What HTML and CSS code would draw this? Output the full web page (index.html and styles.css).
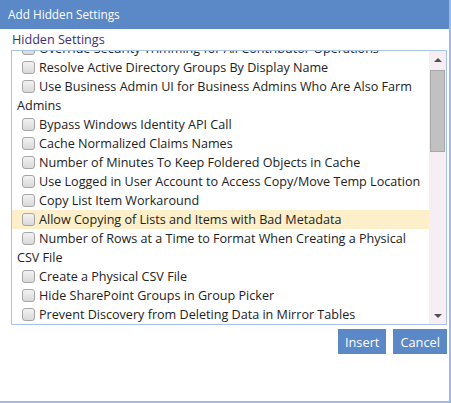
FILE: index.html
```html
<!DOCTYPE html>
<html>
<head>
<meta charset="utf-8">
<link rel="stylesheet" href="styles.css">
</head>
<body>
<div class="dialog">
  <div class="titlebar">Add Hidden Settings</div>
  <div class="body">
    <div class="label">Hidden Settings</div>
    <div class="listbox">
      <div class="viewport">
        <ul class="items">
          <li><span class="cb"></span>Override Security Trimming for All Contributor Operations</li>
          <li><span class="cb"></span>Resolve Active Directory Groups By Display Name</li>
          <li><span class="cb"></span>Use Business Admin UI for Business Admins Who Are Also Farm Admins</li>
          <li><span class="cb"></span>Bypass Windows Identity API Call</li>
          <li><span class="cb"></span>Cache Normalized Claims Names</li>
          <li><span class="cb"></span>Number of Minutes To Keep Foldered Objects in Cache</li>
          <li><span class="cb"></span>Use Logged in User Account to Access Copy/Move Temp Location</li>
          <li><span class="cb"></span>Copy List Item Workaround</li>
          <li class="hl"><span class="cb"></span>Allow Copying of Lists and Items with Bad Metadata</li>
          <li><span class="cb"></span>Number of Rows at a Time to Format When Creating a Physical CSV File</li>
          <li><span class="cb"></span>Create a Physical CSV File</li>
          <li><span class="cb"></span>Hide SharePoint Groups in Group Picker</li>
          <li><span class="cb"></span>Prevent Discovery from Deleting Data in Mirror Tables</li>
          <li><span class="cb"></span>Enable Verbose Logging</li>
        </ul>
      </div>
      <div class="scrollbar">
        <div class="arrow up"></div>
        <div class="track"><div class="thumb"></div></div>
        <div class="arrow down"></div>
      </div>
    </div>
    <div class="actions">
      <button class="btn">Insert</button>
      <button class="btn">Cancel</button>
    </div>
  </div>
</div>
</body>
</html>
```
FILE: styles.css
```css
html, body {
  margin: 0;
  padding: 0;
  background: #ffffff;
}
body {
  font-family: "Open Sans", "Noto Sans", sans-serif;
  font-size: 12.6px;
  color: #222;
}
.dialog {
  width: 449px;
  height: 401px;
  border-right: 2px solid #9dbbe6;
  border-bottom: 2px solid #9dbbe6;
  display: flex;
  flex-direction: column;
}
.titlebar {
  height: 29px;
  background: #5b88c6;
  color: #fff;
  font-size: 11.8px;
  line-height: 28px;
  padding-left: 8px;
}
.body {
  padding: 2px 2px 0 11px;
  flex: 1;
}
.label {
  color: #3b2f78;
  font-size: 12.6px;
  line-height: 18px;
  padding-left: 1px;
}
.listbox {
  height: 273px;
  margin-top: 1px;
  border: 1px solid #a9c3e8;
  display: flex;
}
.viewport {
  flex: 1;
  overflow: hidden;
}
.items {
  list-style: none;
  margin: -12px 0 0 0;
  padding: 0;
}
.items li {
  line-height: 19px;
  padding-left: 5px;
}
.items li.hl {
  background: #fdefc9;
}
.cb {
  display: inline-block;
  width: 11px;
  height: 11px;
  border: 1px solid #a6a6a6;
  border-radius: 3px;
  background: linear-gradient(#f2f2f2, #d9d9d9);
  vertical-align: -2px;
  margin: 0 4px 0 5px;
}
.scrollbar {
  width: 17px;
  background: #f6eef3;
  display: flex;
  flex-direction: column;
}
.arrow {
  height: 17px;
  display: flex;
  align-items: center;
  justify-content: center;
}
.arrow::before {
  content: "";
  border-left: 4px solid transparent;
  border-right: 4px solid transparent;
}
.arrow.up::before {
  border-bottom: 4px solid #505050;
}
.arrow.down::before {
  border-top: 4px solid #505050;
}
.track {
  flex: 1;
  padding: 0 1px;
}
.thumb {
  height: 80px;
  margin-top: 2px;
  background: #c1c1c1;
  border: 1px solid #a8a8a8;
}
.actions {
  display: flex;
  justify-content: flex-end;
  gap: 7px;
  margin-top: 4px;
  padding-right: 0;
}
.btn {
  font-family: "Open Sans", "Noto Sans", sans-serif;
  font-size: 12.8px;
  color: #fff;
  background: #5b88c6;
  border: none;
  height: 25px;
  padding: 0 7px;
  margin: 0;
}
```
